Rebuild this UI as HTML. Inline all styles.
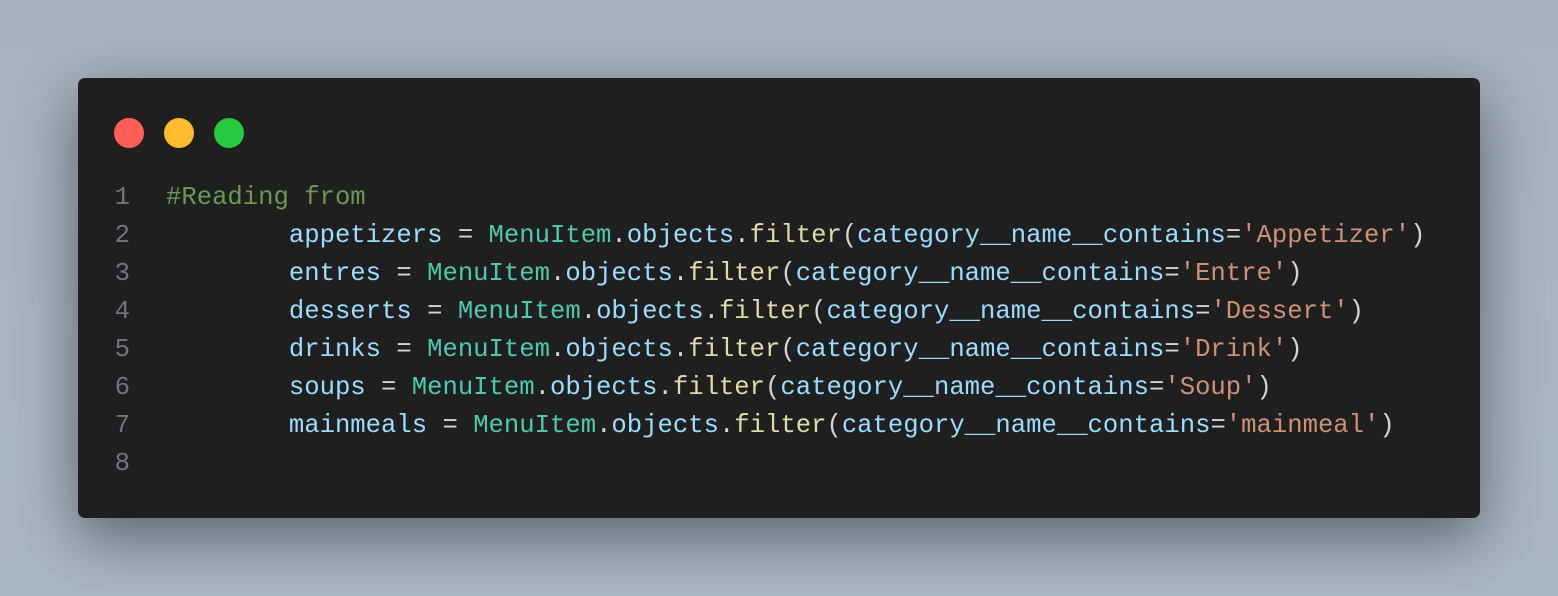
<!DOCTYPE html>
<html><head><style>
html,body{margin:0;padding:0;}
body{width:1558px;height:596px;background:linear-gradient(180deg,#a7b1bd,#a9b6c3);position:relative;overflow:hidden;}
.card{position:absolute;left:78px;top:78px;width:1402px;height:440px;background:#1f1f1f;border-radius:7px;box-shadow:0 20px 60px rgba(0,0,0,0.45);}
.dot{position:absolute;top:40px;width:30px;height:30px;border-radius:50%;}
.code{position:absolute;left:0;top:101px;font-family:"Liberation Mono",monospace;font-size:25.6px;line-height:38px;color:#d4d4d4;white-space:pre;}
.ln{display:inline-block;width:52px;text-align:right;color:#6e7681;margin-right:36px;}
.c{color:#6a9955}.v{color:#9cdcfe}.k{color:#4ec9b0}.f{color:#dcdcaa}.s{color:#ce9178}
</style></head><body>
<div class="card">
<div class="dot" style="left:36px;background:#ff5f57"></div>
<div class="dot" style="left:86px;background:#febc2e"></div>
<div class="dot" style="left:136px;background:#28c840"></div>
<div class="code"><div><span class="ln">1</span><span class="c">#Reading from</span></div><div><span class="ln">2</span>        <span class="v">appetizers</span> = <span class="k">MenuItem</span>.<span class="v">objects</span>.<span class="f">filter</span>(<span class="v">category__name__contains</span>=<span class="s">'Appetizer'</span>)</div><div><span class="ln">3</span>        <span class="v">entres</span> = <span class="k">MenuItem</span>.<span class="v">objects</span>.<span class="f">filter</span>(<span class="v">category__name__contains</span>=<span class="s">'Entre'</span>)</div><div><span class="ln">4</span>        <span class="v">desserts</span> = <span class="k">MenuItem</span>.<span class="v">objects</span>.<span class="f">filter</span>(<span class="v">category__name__contains</span>=<span class="s">'Dessert'</span>)</div><div><span class="ln">5</span>        <span class="v">drinks</span> = <span class="k">MenuItem</span>.<span class="v">objects</span>.<span class="f">filter</span>(<span class="v">category__name__contains</span>=<span class="s">'Drink'</span>)</div><div><span class="ln">6</span>        <span class="v">soups</span> = <span class="k">MenuItem</span>.<span class="v">objects</span>.<span class="f">filter</span>(<span class="v">category__name__contains</span>=<span class="s">'Soup'</span>)</div><div><span class="ln">7</span>        <span class="v">mainmeals</span> = <span class="k">MenuItem</span>.<span class="v">objects</span>.<span class="f">filter</span>(<span class="v">category__name__contains</span>=<span class="s">'mainmeal'</span>)</div><div><span class="ln">8</span></div></div>
</div>
</body></html>
